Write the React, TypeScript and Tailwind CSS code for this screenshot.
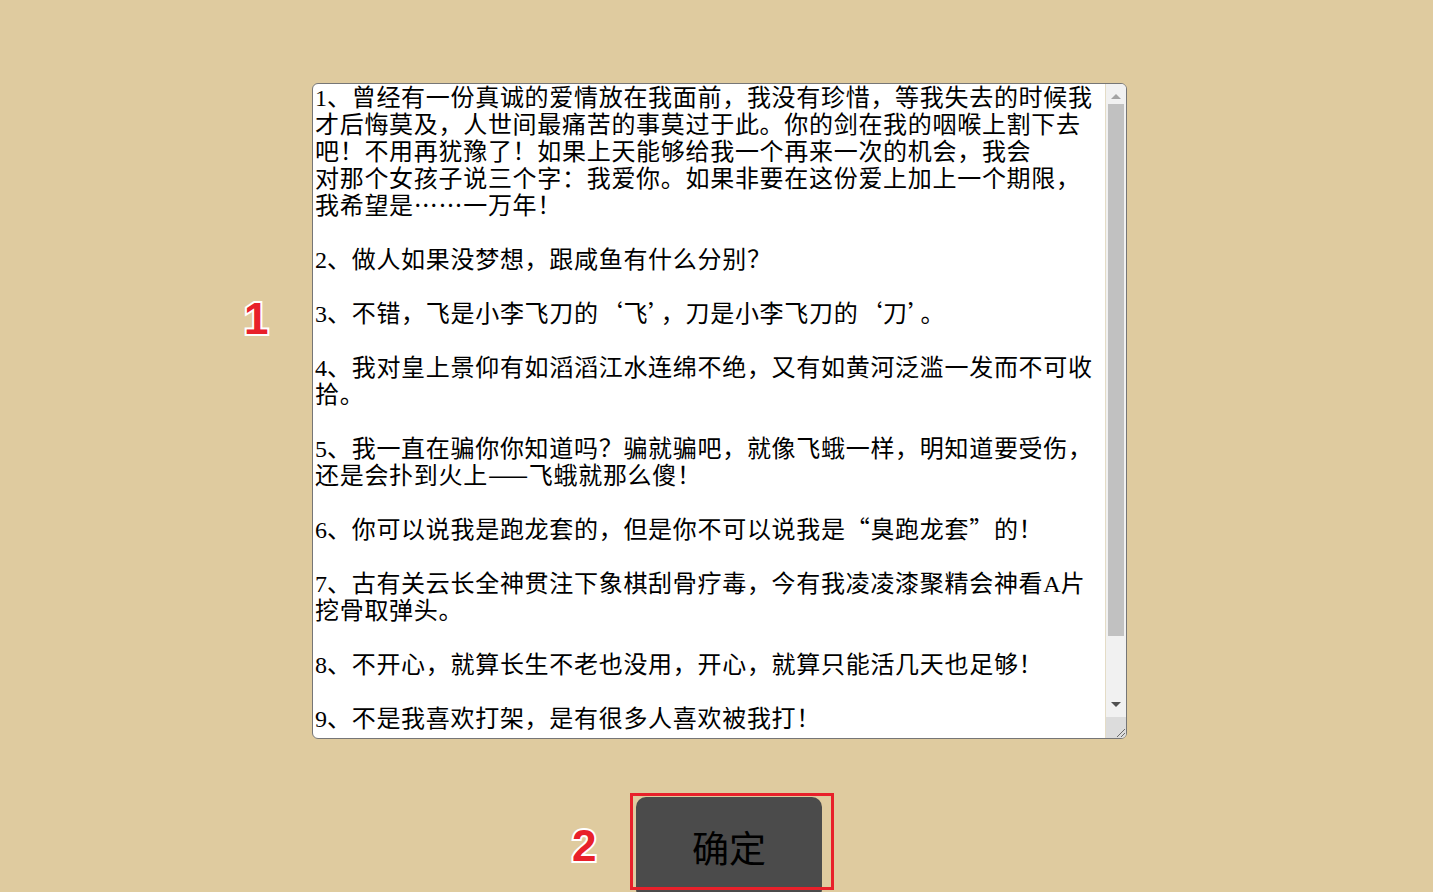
const quotes = `1、曾经有一份真诚的爱情放在我面前，我没有珍惜，等我失去的时候我
才后悔莫及，人世间最痛苦的事莫过于此。你的剑在我的咽喉上割下去
吧！不用再犹豫了！如果上天能够给我一个再来一次的机会，我会
对那个女孩子说三个字：我爱你。如果非要在这份爱上加上一个期限，
我希望是……一万年！

2、做人如果没梦想，跟咸鱼有什么分别？

3、不错，飞是小李飞刀的‘飞’，刀是小李飞刀的‘刀’。

4、我对皇上景仰有如滔滔江水连绵不绝，又有如黄河泛滥一发而不可收
拾。

5、我一直在骗你你知道吗？骗就骗吧，就像飞蛾一样，明知道要受伤，
还是会扑到火上——飞蛾就那么傻！

6、你可以说我是跑龙套的，但是你不可以说我是“臭跑龙套”的！

7、古有关云长全神贯注下象棋刮骨疗毒，今有我凌凌漆聚精会神看A片
挖骨取弹头。

8、不开心，就算长生不老也没用，开心，就算只能活几天也足够！

9、不是我喜欢打架，是有很多人喜欢被我打！`;

// latin letters / digits get the serif face, the rest stays CJK
function QuoteText({ text }: { text: string }) {
  return (
    <>
      {text.split(/([0-9A-Za-z]+)/).map((part, i) =>
        /^[0-9A-Za-z]+$/.test(part) ? (
          <span key={i} className="font-['Liberation_Serif',serif] leading-[0] tracking-normal">
            {part}
          </span>
        ) : (
          part
        )
      )}
    </>
  );
}

function Marker({ n, className }: { n: string; className: string }) {
  return (
    <span
      className={`absolute font-['Liberation_Sans',sans-serif] text-[44px] font-black leading-none text-[#e8202a] [-webkit-text-stroke:4px_white] [paint-order:stroke_fill] ${className}`}
    >
      {n}
    </span>
  );
}

function Scrollbar() {
  return (
    <div className="flex w-[21px] shrink-0 flex-col border-l border-[#e4dcc6] bg-[#f1f1f1]">
      <div className="flex h-[20px] items-center justify-center pt-[4px]">
        <span className="h-0 w-0 border-x-[5px] border-b-[5px] border-x-transparent border-b-[#a3a3a3]" />
      </div>
      <div className="mx-[2px] h-[532px] bg-[#c1c1c1]" />
      <div className="flex-1" />
      <div className="flex h-[20px] items-center justify-center pb-[6px]">
        <span className="h-0 w-0 border-x-[5px] border-t-[5px] border-x-transparent border-t-[#505050]" />
      </div>
      <div className="relative h-[21px] bg-[#dcdcdc]">
        <svg className="absolute bottom-0 right-0" width="12" height="12" viewBox="0 0 12 12">
          <path d="M11 3 L3 11 M11 7 L7 11" stroke="#6b6b6b" strokeWidth="1" />
        </svg>
      </div>
    </div>
  );
}

export default function App() {
  return (
    <div className="flex h-[892px] flex-col items-center overflow-hidden bg-[#dfcb9f] pt-[83px]">
      <div className="relative ml-[6px]">
        <Marker n="1" className="left-[-68px] top-[214px]" />
        <div className="flex h-[656px] w-[815px] overflow-hidden rounded-[6px] border border-[#767676] bg-white">
          <div className="-mt-[2px] flex-1 overflow-hidden whitespace-pre-wrap pl-[2px] font-['Noto_Sans_CJK_SC',serif] text-[24px] leading-[27px] tracking-[0.7px] text-black">
            <QuoteText text={quotes} />
          </div>
          <Scrollbar />
        </div>
      </div>

      <div className="relative ml-[25px] mt-[58px]">
        <Marker n="2" className="left-[-64px] top-[27px]" />
        <button className="flex h-[102px] w-[186px] items-center justify-center rounded-[10px] bg-[#4b4b4b] font-['Noto_Sans_CJK_SC',sans-serif] text-[37px] text-black">
          确定
        </button>
        <div className="pointer-events-none absolute left-[-6px] top-[-4px] h-[97px] w-[204px] border-[3px] border-[#e8202a]" />
      </div>
    </div>
  );
}
